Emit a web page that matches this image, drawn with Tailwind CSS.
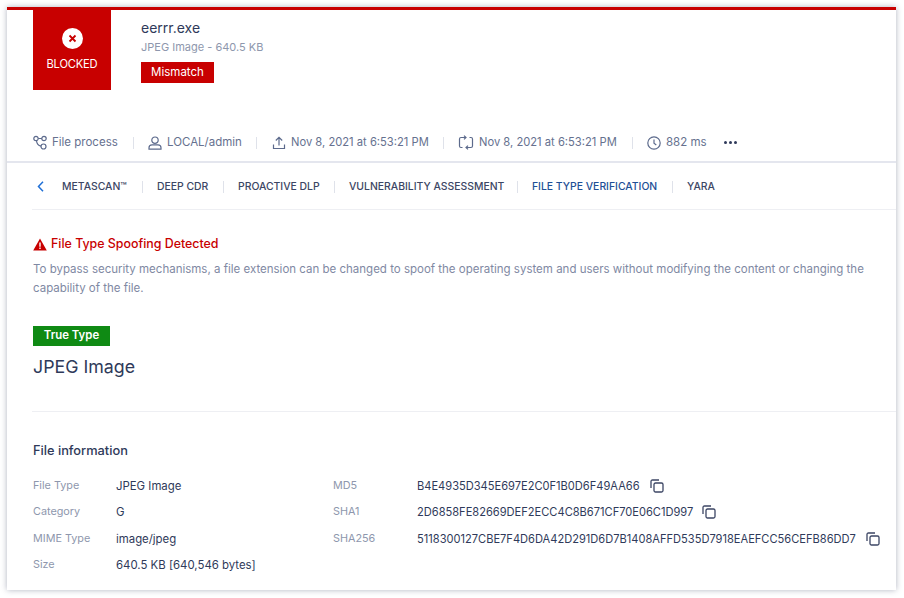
<!DOCTYPE html>
<html lang="en">
<head>
  <meta charset="UTF-8">
  <title>File Type Verification</title>
  <script src="https://cdn.jsdelivr.net/npm/@tailwindcss/browser@4"></script>
</head>
<body class="w-[904px] h-[598px] bg-white overflow-hidden font-['Inter','Noto_Sans',sans-serif] text-[#2f3a5a]">
  <div class="ml-[7px] mt-[7px] w-[889px] h-[583px] bg-white border-t-[3px] border-[#c80000] shadow-[0_0_6px_rgba(60,70,100,0.4)]">

    <!-- header -->
    <div class="flex pl-[26px] h-[80px]">
      <div class="w-[78px] h-[80px] bg-[#c80000] flex flex-col items-center text-white">
        <div class="mt-[18px] w-[21px] h-[21px] rounded-full bg-white flex items-center justify-center">
          <svg width="9" height="9" viewBox="0 0 9 9" fill="none" stroke="#c80000" stroke-width="1.8"><path d="M1.5 1.5l6 6M7.5 1.5l-6 6"/></svg>
        </div>
        <div class="mt-[7px] text-[11.2px] leading-[16px] tracking-[-0.2px]">BLOCKED</div>
      </div>
      <div class="ml-[30px] flex flex-col items-start">
        <div class="mt-[9px] text-[14px] leading-[18px]">eerrr.exe</div>
        <div class="mt-[2px] text-[11px] leading-[16px] text-[#8e97ad]">JPEG Image - 640.5 KB</div>
        <div class="mt-[7px] w-[73px] h-[21px] bg-[#c80000] text-white text-[11.5px] flex items-center justify-center">Mismatch</div>
      </div>
    </div>

    <!-- meta row -->
    <div class="mt-[37px] h-[36px] pb-[3px] pl-[26px] flex items-center border-b-2 border-[#e4e6ee] text-[11.5px] text-[#66718f] whitespace-nowrap">
      <svg class="w-[15px] h-[15px]" viewBox="0 0 15 15" fill="none" stroke="#5c6a8c" stroke-width="1.2"><circle cx="3" cy="3.5" r="2.2"/><circle cx="11" cy="3.5" r="2.2"/><circle cx="10.5" cy="11.5" r="2.5"/><path d="M5.2 3.5h3.600M3.500 5.700c.3 3 2.500 5 4.500 5.500"/></svg>
      <span class="ml-[4px] w-[67px]">File process</span>
      <span class="mx-[14px] w-px h-[12px] bg-[#dfe2ea]"></span>
      <svg class="w-[14px] h-[14px]" viewBox="0 0 14 14" fill="none" stroke="#5c6a8c" stroke-width="1.2"><circle cx="7" cy="4.2" r="3.2"/><path d="M1 13.2v-1.400c0-1.700 1.300-3 3-3h6c1.700 0 3 1.300 3 3v1.400z"/></svg>
      <span class="ml-[5px] w-[75px]">LOCAL/admin</span>
      <span class="mx-[14px] w-px h-[12px] bg-[#dfe2ea]"></span>
      <svg class="ml-px w-[14px] h-[14px]" viewBox="0 0 14 14" fill="none" stroke="#5c6a8c" stroke-width="1.2"><path d="M7 9.500V1.500M3.800 4.500L7 1.300l3.200 3.200M1.500 8.500v4h11v-4"/></svg>
      <span class="ml-[5px] w-[138px] text-[11.2px]">Nov 8, 2021 at 6:53:21 PM</span>
      <span class="mx-[14px] w-px h-[12px] bg-[#dfe2ea]"></span>
      <svg class="w-[16px] h-[15px]" viewBox="0 0 16 15" fill="none" stroke="#5c6a8c" stroke-width="1.200"><path d="M4.500 12.500H3c-1 0-1.500-.5-1.500-1.500V4c0-1 .5-1.500 1.500-1.500h4.500M6 .6l2 1.900-2 1.900M11.500 2.500H13c1 0 1.500.5 1.500 1.500v7c0 1-.5 1.500-1.500 1.500H8.500M10 10.600l-2 1.900 2 1.900"/></svg>
      <span class="ml-[5px] w-[139px] text-[11.2px]">Nov 8, 2021 at 6:53:21 PM</span>
      <span class="mx-[14px] w-px h-[12px] bg-[#dfe2ea]"></span>
      <svg class="w-[14px] h-[14px]" viewBox="0 0 14 14" fill="none" stroke="#5c6a8c" stroke-width="1.2"><circle cx="7" cy="7" r="6.200"/><path d="M7 3.500V7.300l2.300 1.700"/></svg>
      <span class="ml-[5px] w-[40px]">882 ms</span>
      <span class="ml-[18px] flex gap-[2px]">
        <i class="block w-[3px] h-[3px] rounded-full bg-[#2f3a5a]"></i>
        <i class="block w-[3px] h-[3px] rounded-full bg-[#2f3a5a]"></i>
        <i class="block w-[3px] h-[3px] rounded-full bg-[#2f3a5a]"></i>
      </span>
    </div>

    <!-- tabs -->
    <div class="h-[47px] pt-px ml-[25px] flex items-center border-b border-[#eeeff3] text-[10.4px] font-medium text-[#3c4664] whitespace-nowrap">
      <svg class="w-[7px] h-[11px] ml-[5px]" viewBox="0 0 7 11" fill="none" stroke="#1f6fd6" stroke-width="1.5"><path d="M6 .8L1.500 5.500 6 10.200"/></svg>
      <span class="ml-[18px] w-[66px]">METASCAN™</span>
      <span class="mx-[14px] w-px h-[12px] bg-[#dfe2ea]"></span>
      <span class="w-[52px]">DEEP CDR</span>
      <span class="mx-[14px] w-px h-[12px] bg-[#dfe2ea]"></span>
      <span class="w-[82px]">PROACTIVE DLP</span>
      <span class="mx-[14px] w-px h-[12px] bg-[#dfe2ea]"></span>
      <span class="w-[154px]">VULNERABILITY ASSESSMENT</span>
      <span class="mx-[14px] w-px h-[12px] bg-[#dfe2ea]"></span>
      <span class="w-[126px] text-[#1e4f96]">FILE TYPE VERIFICATION</span>
      <span class="mx-[14px] w-px h-[12px] bg-[#dfe2ea]"></span>
      <span>YARA</span>
    </div>

    <!-- spoofing message -->
    <div class="pl-[26px]">
      <div class="mt-[25px] flex items-center text-[12.4px] leading-[18px] font-medium text-[#c80000]">
        <svg class="w-[14px] h-[13px]" viewBox="0 0 14 13"><path fill="#c80000" fill-rule="evenodd" d="M7 .5L13.800 12.500H.2zM6.300 4.500v4.200h1.400V4.500zM6.300 9.600v1.400h1.400V9.600z"/></svg>
        <span class="ml-[4px]">File Type Spoofing Detected</span>
      </div>
      <p class="mt-[7px] w-[845px] text-[11.5px] leading-[19px] text-[#7f89a3]">To bypass security mechanisms, a file extension can be changed to spoof the operating system and users without modifying the content or changing the capability of the file.</p>
      <div class="mt-[28px] w-[77px] h-[20px] bg-[#0f8a14] text-white text-[11.4px] font-semibold flex items-center justify-center">True Type</div>
      <div class="mt-[8px] text-[17.8px] leading-[26px]">JPEG Image</div>
    </div>

    <!-- file information -->
    <div class="mt-[31px] ml-[25px] border-t border-[#eeeff3] pl-px">
      <div class="mt-[30px] text-[12.8px] leading-[18px] font-medium">File information</div>
      <div class="mt-[13px] flex text-[11.4px] leading-[26.300px]">
        <div class="w-[83px] text-[10.8px] text-[#8e97ad]">
          <div>File Type</div><div>Category</div><div>MIME Type</div><div>Size</div>
        </div>
        <div class="w-[217px]">
          <div>JPEG Image</div><div>G</div><div>image/jpeg</div><div>640.5 KB [640,546 bytes]</div>
        </div>
        <div class="w-[84px] text-[10.8px] text-[#8e97ad]">
          <div>MD5</div><div>SHA1</div><div>SHA256</div>
        </div>
        <div class="text-[11.1px]">
          <div class="flex items-center">B4E4935D345E697E2C0F1B0D6F49AA66
            <svg class="ml-[10px] w-[14px] h-[14px]" viewBox="0 0 14 14" fill="none" stroke="#3c4664" stroke-width="1.300"><rect x="4" y="4" width="9" height="9" rx="1.500"/><path d="M1 9V2.500C1 1.500 1.500 1 2.500 1H9"/></svg>
          </div>
          <div class="flex items-center">2D6858FE82669DEF2ECC4C8B671CF70E06C1D997
            <svg class="ml-[9px] w-[14px] h-[14px]" viewBox="0 0 14 14" fill="none" stroke="#3c4664" stroke-width="1.300"><rect x="4" y="4" width="9" height="9" rx="1.500"/><path d="M1 9V2.500C1 1.500 1.500 1 2.500 1H9"/></svg>
          </div>
          <div class="flex items-center">5118300127CBE7F4D6DA42D291D6D7B1408AFFD535D7918EAEFCC56CEFB86DD7
            <svg class="ml-[10px] w-[14px] h-[14px]" viewBox="0 0 14 14" fill="none" stroke="#3c4664" stroke-width="1.300"><rect x="4" y="4" width="9" height="9" rx="1.500"/><path d="M1 9V2.500C1 1.500 1.500 1 2.500 1H9"/></svg>
          </div>
        </div>
      </div>
    </div>
  </div>
</body>
</html>
